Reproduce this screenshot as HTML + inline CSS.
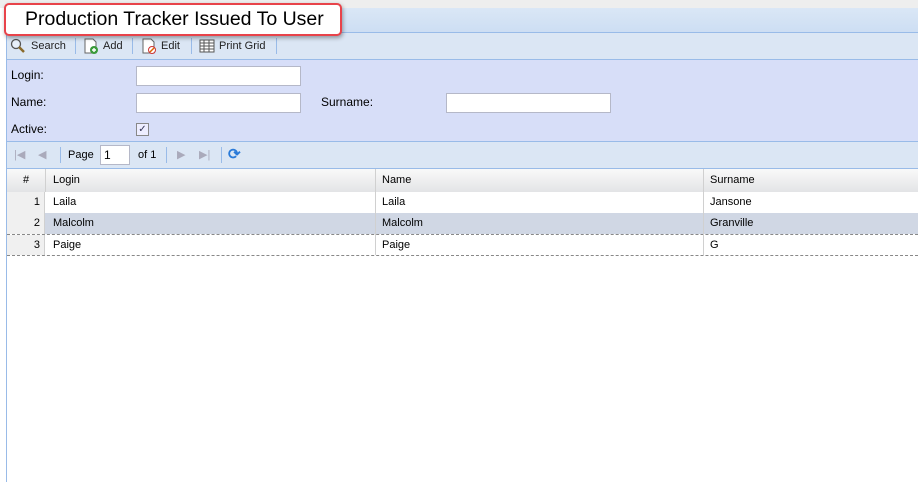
<!DOCTYPE html>
<html><head><style>
body{margin:0;width:918px;height:482px;overflow:hidden;background:#fff;font-family:"Liberation Sans",sans-serif;font-size:12px;color:#000;position:relative}
.abs{position:absolute}
.tb span{position:absolute;top:40px;font-size:11px;color:#222}
.sep{position:absolute;width:1px;background:#99bbe8}
input.t{position:absolute;height:20px;border:1px solid #b5b8c8;background:#fff;box-sizing:border-box;padding:0}
.lbl{position:absolute;font-size:12px}
.row{position:absolute;left:7px;right:0;height:21px;font-size:11px}
.row div{position:absolute;top:4px}
.num{left:0;width:38px;height:21px;top:0!important;background:#f0f0f0;text-align:right;box-sizing:border-box;padding:4px 4px 0 0;border-right:1px solid #d0d0d0}
</style></head><body>
<div class="abs" style="left:0;top:0;width:918px;height:8px;background:#eeeeee"></div>
<div class="abs" style="left:6px;top:8px;width:912px;height:474px;border-left:1px solid #99bbe8;box-sizing:border-box"></div>
<div class="abs" style="left:7px;top:8px;width:911px;height:24px;background:linear-gradient(#dae7f6,#cddef3);border-bottom:1px solid #99bbe8"></div>
<div class="abs" style="left:7px;top:33px;width:911px;height:26px;background:#dbe6f4;border-bottom:1px solid #99bbe8"></div>
<div class="tb">
<svg class="abs" style="left:10px;top:38px" width="16" height="16"><circle cx="6" cy="6" r="4.5" fill="#e8f0fa" stroke="#555" stroke-width="1.3"/><path d="M9 9l5 5" stroke="#8a6a2a" stroke-width="2.5"/></svg>
<span style="left:31px">Search</span>
<div class="sep" style="left:75px;top:38px;height:16px"></div>
<svg class="abs" style="left:83px;top:38px" width="16" height="16"><path d="M2 1h8l3 3v11H2z" fill="#fff" stroke="#666"/><circle cx="11" cy="12" r="4" fill="#3a9a3a"/><path d="M9 12h4M11 10v4" stroke="#fff" stroke-width="1.4"/></svg>
<span style="left:103px">Add</span>
<div class="sep" style="left:132px;top:38px;height:16px"></div>
<svg class="abs" style="left:141px;top:38px" width="16" height="16"><path d="M2 1h8l3 3v11H2z" fill="#fff" stroke="#666"/><circle cx="11" cy="12" r="3.5" fill="#fff" stroke="#c33"/><path d="M9 14l4-4" stroke="#d60" stroke-width="1.5"/></svg>
<span style="left:161px">Edit</span>
<div class="sep" style="left:191px;top:38px;height:16px"></div>
<svg class="abs" style="left:199px;top:38px" width="16" height="16"><rect x="1" y="2" width="14" height="12" fill="#fff" stroke="#555"/><path d="M1 5h14M1 8h14M1 11h14M5 2v12M10 2v12" stroke="#555"/></svg>
<span style="left:219px">Print Grid</span>
<div class="sep" style="left:276px;top:38px;height:16px"></div>
</div>
<div class="abs" style="left:7px;top:60px;width:911px;height:81px;background:#d7def8;border-bottom:1px solid #99bbe8"></div>
<div class="lbl" style="left:11px;top:68px">Login:</div>
<input class="t" style="left:136px;top:66px;width:165px">
<div class="lbl" style="left:11px;top:95px">Name:</div>
<input class="t" style="left:136px;top:93px;width:165px">
<div class="lbl" style="left:321px;top:95px">Surname:</div>
<input class="t" style="left:446px;top:93px;width:165px">
<div class="lbl" style="left:11px;top:122px">Active:</div>
<div class="abs" style="left:136px;top:123px;width:11px;height:11px;border:1px solid #888;background:#eef;font-size:10px;line-height:11px;text-align:center;color:#335">✓</div>
<div class="abs" style="left:7px;top:142px;width:911px;height:26px;background:#dbe6f4;border-bottom:1px solid #99bbe8"></div>
<div class="abs" style="left:14px;top:148px;color:#aab;font-size:11px">|◀</div>
<div class="abs" style="left:38px;top:148px;color:#aab;font-size:11px">◀</div>
<div class="sep" style="left:60px;top:147px;height:16px"></div>
<div class="abs" style="left:68px;top:149px;font-size:11px">Page</div>
<input class="t" style="left:100px;top:145px;width:30px;font-size:12px;padding-left:3px" value="1">
<div class="abs" style="left:138px;top:149px;font-size:11px">of 1</div>
<div class="sep" style="left:166px;top:147px;height:16px"></div>
<div class="abs" style="left:177px;top:148px;color:#aab;font-size:11px">▶</div>
<div class="abs" style="left:199px;top:148px;color:#aab;font-size:11px">▶|</div>
<div class="sep" style="left:221px;top:147px;height:16px"></div>
<div class="abs" style="left:228px;top:145px;color:#2a7ad8;font-size:15px;font-weight:bold">⟳</div>
<div class="abs" style="left:7px;top:169px;width:911px;height:23px;background:linear-gradient(#f9f9f9,#e3e4e6);border-bottom:1px solid #c5c5c5;font-size:11px">
<div class="abs" style="left:0;width:38px;top:0;height:23px;border-right:1px solid #d0d0d0;text-align:center;line-height:22px">#</div>
<div class="abs" style="left:46px;top:5px">Login</div>
<div class="abs" style="left:368px;top:0;height:23px;border-left:1px solid #d0d0d0"></div>
<div class="abs" style="left:375px;top:5px">Name</div>
<div class="abs" style="left:696px;top:0;height:23px;border-left:1px solid #d0d0d0"></div>
<div class="abs" style="left:703px;top:5px">Surname</div>
</div>
<div class="row" style="top:192px;background:#fff;border-bottom:1px solid #ededed"><div class="num">1</div><div style="left:46px">Laila</div><div style="left:375px">Laila</div><div style="left:703px">Jansone</div></div>
<div class="row" style="top:213px;background:#d0d7e4"><div class="num">2</div><div style="left:46px">Malcolm</div><div style="left:375px">Malcolm</div><div style="left:703px">Granville</div></div>
<div class="row" style="top:234px;background:#fff;border-top:1px dashed #888;border-bottom:1px dashed #888;height:20px"><div class="num" style="height:20px">3</div><div style="left:46px">Paige</div><div style="left:375px">Paige</div><div style="left:703px">G</div></div>
<div class="abs" style="left:375px;top:192px;height:63px;border-left:1px solid #d0d0d0"></div>
<div class="abs" style="left:703px;top:192px;height:63px;border-left:1px solid #d0d0d0"></div>
<div class="abs" style="left:4px;top:3px;height:29px;background:#fff;border:2px solid #e8434a;border-radius:5px;box-shadow:1px 2px 4px rgba(0,0,0,.35);font-size:19.5px;line-height:29px;padding-left:19px;width:315px;white-space:nowrap">Production Tracker Issued To User</div>
</body></html>
